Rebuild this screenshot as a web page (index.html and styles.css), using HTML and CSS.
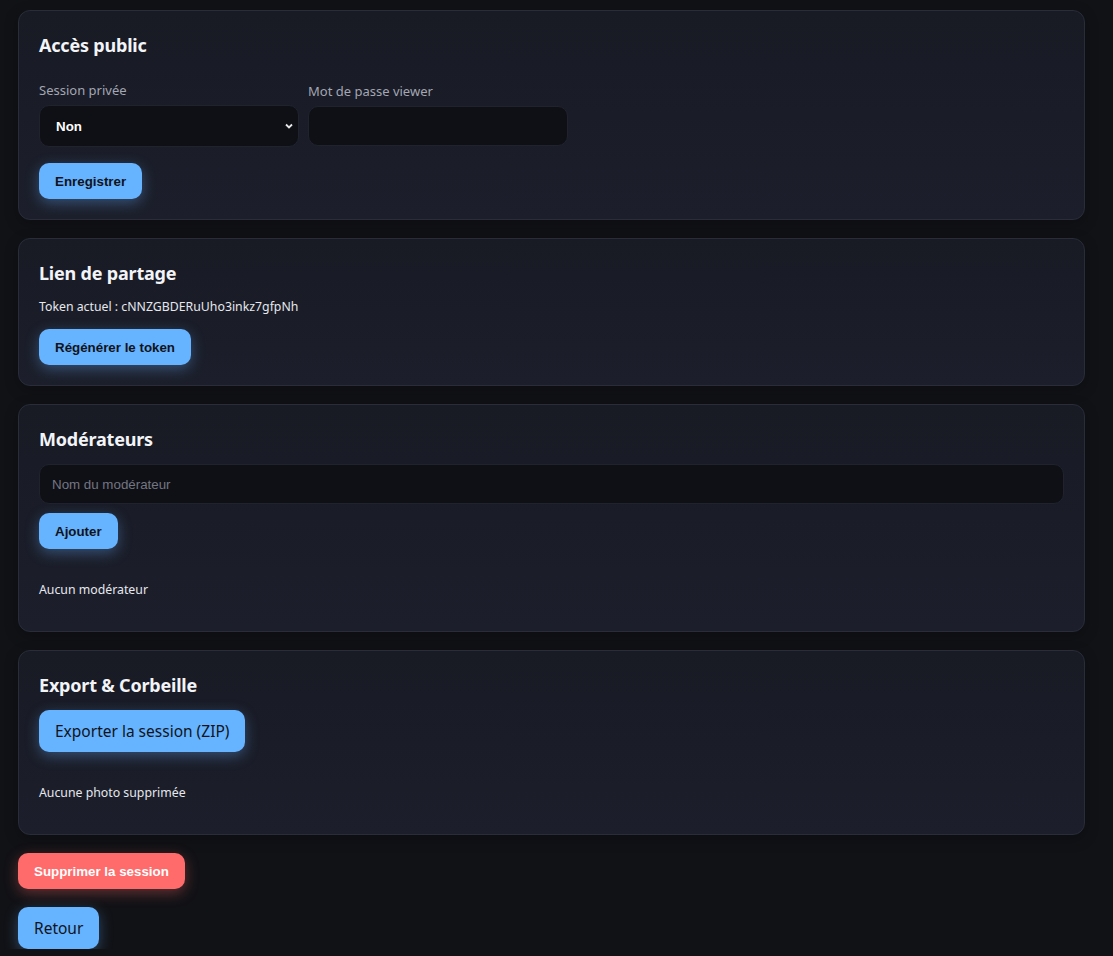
FILE: index.html
```html
<!DOCTYPE html>
<html lang="fr">

<head>
    <meta charset="utf-8">
    <title>Paramètres de la session</title>
    <link rel="stylesheet" href="styles.css">
</head>

<body>
    <div class="page">
        <!-- Accès public -->
        <section class="card">
            <h2 class="card-title">Accès public</h2>
            <div class="field-row">
                <div class="field">
                    <label class="field-label" for="private">Session privée</label>
                    <div class="select-wrap">
                        <select id="private" class="field-select">
                            <option>Non</option>
                            <option>Oui</option>
                        </select>
                        <svg class="select-arrow" width="10" height="10" viewBox="0 0 10 10">
                            <path d="M2 3.5 L5 6.5 L8 3.5" fill="none" stroke="#e8e8e8" stroke-width="1.8" />
                        </svg>
                    </div>
                </div>
                <div class="field field-pass">
                    <label class="field-label" for="viewer-pass">Mot de passe viewer</label>
                    <input id="viewer-pass" class="field-input" type="password" />
                </div>
            </div>
            <button class="btn btn-small">Enregistrer</button>
        </section>

        <!-- Lien de partage -->
        <section class="card">
            <h2 class="card-title">Lien de partage</h2>
            <p class="card-text token-line">Token actuel : cNNZGBDERuUho3inkz7gfpNh</p>
            <button class="btn btn-small">Régénérer le token</button>
        </section>

        <!-- Modérateurs -->
        <section class="card">
            <h2 class="card-title">Modérateurs</h2>
            <input class="field-input wide-input" type="text" placeholder="Nom du modérateur" />
            <button class="btn btn-small">Ajouter</button>
            <p class="card-text empty-text">Aucun modérateur</p>
        </section>

        <!-- Export & Corbeille -->
        <section class="card">
            <h2 class="card-title">Export &amp; Corbeille</h2>
            <button class="btn btn-large">Exporter la session (ZIP)</button>
            <p class="card-text empty-text">Aucune photo supprimée</p>
        </section>

        <div class="actions">
            <button class="btn btn-small btn-danger">Supprimer la session</button>
            <button class="btn btn-large btn-back">Retour</button>
        </div>
    </div>
</body>

</html>
```

FILE: styles.css
```css
body {
    margin: 0;
    background-color: #111216;
    color: #e6e8ee;
    font-family: "Noto Sans", "Open Sans", sans-serif;
}

.page {
    padding: 10px 28px 0 18px;
}

.card {
    background: linear-gradient(180deg, #181a24 0%, #1c1f2b 100%);
    border: 1px solid #292c39;
    border-radius: 12px;
    padding: 20px;
    margin-bottom: 18px;
    box-shadow: 0 4px 14px rgba(0, 0, 0, 0.25);
}

.card-title {
    margin: 0 0 11px 0;
    font-size: 18px;
    font-weight: 700;
    line-height: 28px;
    color: #f2f4f8;
    letter-spacing: -0.2px;
}

/* the title margin collapses into this one */
.field-row {
    display: flex;
    gap: 9px;
    margin-top: 22px;
    margin-bottom: 16px;
}

.field {
    display: flex;
    flex-direction: column;
    width: 260px;
}

.field-pass {
    padding-top: 1px;
}

.field-label {
    font-size: 13px;
    line-height: 18px;
    color: #a3a7b3;
    margin-bottom: 6px;
}

.select-wrap {
    position: relative;
}

.field-select {
    appearance: none;
    -webkit-appearance: none;
    display: block;
    box-sizing: border-box;
    width: 100%;
    height: 42px;
    padding: 0 16px;
    background-color: #0f1016;
    border: 1px solid #20222c;
    border-radius: 10px;
    color: #ffffff;
    font-family: "Liberation Sans", Arial, sans-serif;
    font-size: 13.333px;
    font-weight: 700;
}

.select-arrow {
    position: absolute;
    right: 5px;
    top: 16px;
}

.field-input {
    box-sizing: border-box;
    height: 40px;
    padding: 0 12px;
    background-color: #0f1016;
    border: 1px solid #20222c;
    border-radius: 10px;
    color: #ffffff;
    font-family: "Liberation Sans", Arial, sans-serif;
    font-size: 13.333px;
}

.field-input::placeholder {
    color: #737682;
}

.wide-input {
    display: block;
    width: 100%;
    margin-bottom: 9px;
}

.card-text {
    margin: 0;
    font-size: 12.3px;
    line-height: 18px;
    color: #e6e8ee;
}

.token-line {
    margin: 0 0 13px 0;
}

.empty-text {
    margin: 32px 0 12px 0;
}

.btn {
    display: block;
    border: none;
    border-radius: 10px;
    background-color: #66b3ff;
    color: #10131a;
    cursor: pointer;
    box-shadow: 0 4px 14px rgba(102, 179, 255, 0.35);
}

.btn-small {
    height: 36px;
    padding: 0 16px;
    font-family: "Liberation Sans", Arial, sans-serif;
    font-size: 13.333px;
    font-weight: 700;
}

.btn-large {
    height: 42px;
    padding: 0 16px;
    font-family: "Noto Sans", "Open Sans", sans-serif;
    font-size: 15.5px;
}

.btn-danger {
    background-color: #ff6b6b;
    color: #ffffff;
    box-shadow: 0 4px 14px rgba(255, 107, 107, 0.35);
}

.actions {
    display: flex;
    flex-direction: column;
    align-items: flex-start;
    gap: 18px;
}
```
